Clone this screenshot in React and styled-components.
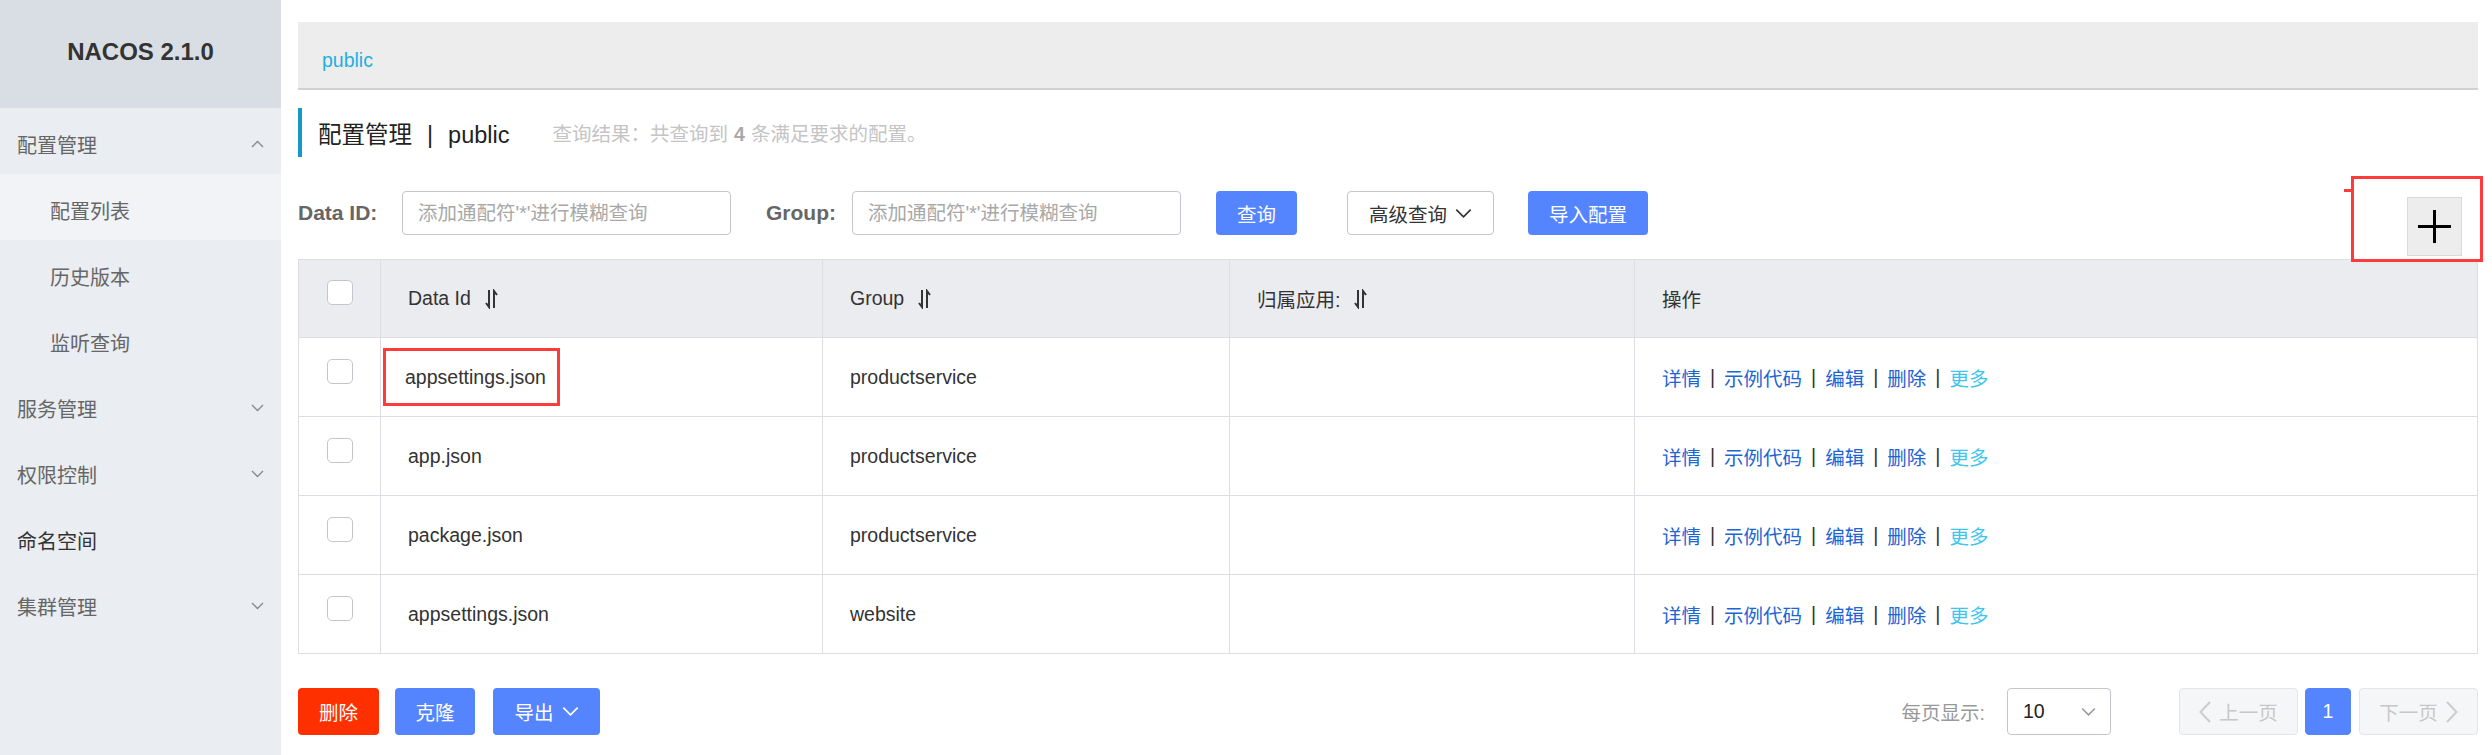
import React from 'react'
import styled, { createGlobalStyle } from 'styled-components'

const GlobalStyle = createGlobalStyle`
    body {
        margin: 0;
        font-family: "Liberation Sans", "Noto Sans CJK SC", sans-serif;
        color: #333;
        background: #fff;
    }
`;

const Page = styled.div`
    display: flex;
    min-height: 755px;
`;

const Sidebar = styled.aside`
    width: 281px;
    flex-shrink: 0;
    background: #eaedf1;
`;

const Brand = styled.div`
    height: 108px;
    background: #d9dee4;
    display: flex;
    align-items: center;
    justify-content: center;
    font-size: 24px;
    font-weight: bold;
    color: #333;
    padding-bottom: 4px;
    box-sizing: border-box;
`;

const MenuItem = styled.div`
    height: 66px;
    display: flex;
    align-items: center;
    justify-content: space-between;
    padding: 6px 17px 0 ${p => (p.$sub ? '50px' : '17px')};
    box-sizing: border-box;
    font-size: 20px;
    color: ${p => (p.$dark ? '#333' : '#666')};
    background: ${p => (p.$active ? '#f1f3f6' : 'transparent')};
`;

const Main = styled.main`
    flex: 1;
    min-width: 0;
    padding: 22px 14px 0 17px;
`;

const Breadcrumb = styled.div`
    height: 68px;
    box-sizing: border-box;
    background: #ededed;
    border-bottom: 2px solid #d1d1d1;
    display: flex;
    align-items: center;
    padding: 10px 0 0 24px;
    font-size: 19.5px;
    color: #1fb0e0;
`;

const TitleBar = styled.div`
    margin-top: 18px;
    height: 49px;
    border-left: 4px solid #1598d0;
    padding-left: 16px;
    display: flex;
    align-items: center;
`;

const Title = styled.h2`
    margin: 0;
    font-weight: normal;
    font-size: 23.5px;
    color: #222;

    span {
        margin: 0 15px;
    }
`;

const Summary = styled.span`
    margin-left: 43px;
    font-size: 19.5px;
    color: #c4c4c4;

    b {
        color: #a9a9a9;
        margin: 0 6px;
    }
`;

const SearchRow = styled.div`
    margin-top: 34px;
    height: 68px;
    display: flex;
    align-items: flex-start;
`;

const Label = styled.label`
    width: ${p => p.$w}px;
    height: 44px;
    line-height: 44px;
    font-size: 21px;
    font-weight: bold;
    color: #666;
    flex-shrink: 0;
`;

const Input = styled.input`
    width: 329px;
    height: 44px;
    box-sizing: border-box;
    border: 1px solid #c4c6cf;
    border-radius: 4px;
    padding: 0 15px;
    font-size: 19.5px;
    font-family: inherit;
    margin-right: ${p => p.$mr ?? 35}px;
    outline: none;

    &::placeholder {
        color: #a8a8a8;
    }
`;

const Button = styled.button`
    height: ${p => p.$h || 44}px;
    width: ${p => p.$w}px;
    margin-left: ${p => p.$ml || 0}px;
    box-sizing: border-box;
    border-radius: 4px;
    border: 1px solid ${p => (p.$kind === 'normal' ? '#c4c6cf' : 'transparent')};
    background: ${p => (p.$kind === 'danger' ? '#ff3000' : p.$kind === 'normal' ? '#fff' : '#5584ff')};
    color: ${p => (p.$kind === 'normal' ? '#333' : '#fff')};
    font-family: inherit;
    font-size: 19.5px;
    display: inline-flex;
    align-items: center;
    justify-content: center;
    gap: 8px;
    padding: 0;
    flex-shrink: 0;
`;

const PlusWrap = styled.div`
    position: relative;
    margin: 6px 16px 0 auto;
`;

const PlusButton = styled.button`
    width: 55px;
    height: 59px;
    box-sizing: border-box;
    background: #ededed;
    border: 1px solid #d9d9d9;
    display: flex;
    align-items: center;
    justify-content: center;
    padding: 0;
`;

const Callout = styled.div`
    position: absolute;
    left: -56px;
    top: -21px;
    right: -21px;
    bottom: -6px;
    border: 3px solid #ff3b3b;
    pointer-events: none;

    &::before {
        content: '';
        position: absolute;
        left: -10px;
        top: 10px;
        width: 8px;
        height: 3px;
        background: #ff3b3b;
    }
`;

const Table = styled.table`
    width: 100%;
    border-collapse: collapse;
    table-layout: fixed;
    font-size: 19.5px;
`;

const Th = styled.th`
    height: 78px;
    box-sizing: border-box;
    background: #ebecf0;
    border: 1px solid #dcdee3;
    text-align: ${p => (p.$center ? 'center' : 'left')};
    padding: 0 0 0 ${p => (p.$center ? 0 : 27)}px;
    font-weight: normal;
    color: #333;
`;

const Td = styled.td`
    height: 79px;
    box-sizing: border-box;
    border: 1px solid #dcdee3;
    text-align: ${p => (p.$center ? 'center' : 'left')};
    padding: 0 0 0 ${p => (p.$center ? 0 : 27)}px;
    color: #333;
    white-space: nowrap;
`;

const HeadCell = styled.span`
    display: inline-flex;
    align-items: center;
    gap: 14px;
`;

const Checkbox = styled.span`
    display: inline-block;
    width: 26px;
    height: 25px;
    box-sizing: border-box;
    border: 1px solid #c4c6cf;
    border-radius: 5px;
    background: #fff;
    vertical-align: middle;
    margin-top: -14px;
`;

const Marked = styled.span`
    display: inline-block;
    margin-left: -25px;
    padding: 15px 11px 15px 19px;
    border: 3px solid #ff3b3b;
    line-height: 22px;
`;

const Actions = styled.div`
    display: flex;
    align-items: center;
`;

const Link = styled.a`
    color: ${p => (p.$light ? '#3cc5ee' : '#1d64d4')};
    text-decoration: none;
`;

const Sep = styled.span`
    margin: 0 9px;
    color: #333;
`;

const Footer = styled.div`
    margin-top: 34px;
    display: flex;
    align-items: center;
    height: 47px;
`;

const PageSize = styled.span`
    margin-left: auto;
    font-size: 19.5px;
    color: #999;
`;

const Select = styled.div`
    width: 104px;
    height: 47px;
    box-sizing: border-box;
    margin-left: 22px;
    border: 1px solid #c4c6cf;
    border-radius: 4px;
    display: flex;
    align-items: center;
    justify-content: space-between;
    padding: 0 14px 0 15px;
    font-size: 19.5px;
    color: #222;
`;

const PageButton = styled.button`
    height: 47px;
    width: ${p => p.$w}px;
    margin-left: ${p => p.$ml}px;
    box-sizing: border-box;
    border-radius: 4px;
    border: 1px solid ${p => (p.$current ? '#5584ff' : '#e3e5ea')};
    background: ${p => (p.$current ? '#5584ff' : '#f5f6f8')};
    color: ${p => (p.$current ? '#fff' : '#c8c8c8')};
    font-family: inherit;
    font-size: 19.5px;
    display: inline-flex;
    align-items: center;
    justify-content: center;
    gap: 8px;
    padding: 0;
`;

const Chevron = ({ up, color = '#888', w = 13, h = 8 }) => (
    <svg width={w} height={h} viewBox="0 0 13 8" fill="none">
        <polyline
            points={up ? '1,7 6.5,1.5 12,7' : '1,1 6.5,6.5 12,1'}
            stroke={color}
            strokeWidth="1.3"
        />
    </svg>
);

const Arrow = ({ left, color = '#ccc' }) => (
    <svg width="12" height="22" viewBox="0 0 12 22" fill="none">
        <polyline
            points={left ? '11,1 1.5,11 11,21' : '1,1 10.5,11 1,21'}
            stroke={color}
            strokeWidth="2"
        />
    </svg>
);

const SortIcon = () => (
    <svg width="13" height="20" viewBox="0 0 13 20" fill="none" stroke="#333" strokeWidth="2">
        <path d="M4 1 V18 L1 14" />
        <path d="M9 19 V2 L12 6" />
    </svg>
);

const PlusIcon = () => (
    <svg width="33" height="33" viewBox="0 0 33 33">
        <path d="M16.5 0 V33 M0 16.5 H33" stroke="#000" strokeWidth="3" />
    </svg>
);

const menu = [
    { label: '配置管理', chevron: 'up' },
    { label: '配置列表', sub: true, active: true },
    { label: '历史版本', sub: true },
    { label: '监听查询', sub: true },
    { label: '服务管理', chevron: 'down' },
    { label: '权限控制', chevron: 'down' },
    { label: '命名空间', dark: true },
    { label: '集群管理', chevron: 'down' },
];

const rows = [
    { id: 'appsettings.json', group: 'productservice', marked: true },
    { id: 'app.json', group: 'productservice' },
    { id: 'package.json', group: 'productservice' },
    { id: 'appsettings.json', group: 'website' },
];

const actions = ['详情', '示例代码', '编辑', '删除'];

export default function App() {
    return (
        <Page>
            <GlobalStyle />
            <Sidebar>
                <Brand>NACOS 2.1.0</Brand>
                {menu.map(m => (
                    <MenuItem key={m.label} $sub={m.sub} $active={m.active} $dark={m.dark}>
                        <span>{m.label}</span>
                        {m.chevron && <Chevron up={m.chevron === 'up'} />}
                    </MenuItem>
                ))}
            </Sidebar>

            <Main>
                <Breadcrumb>public</Breadcrumb>

                <TitleBar>
                    <Title>
                        配置管理<span>|</span>public
                    </Title>
                    <Summary>
                        查询结果：共查询到<b>4</b>条满足要求的配置。
                    </Summary>
                </TitleBar>

                <SearchRow>
                    <Label $w={104}>Data ID:</Label>
                    <Input placeholder="添加通配符'*'进行模糊查询" />
                    <Label $w={86}>Group:</Label>
                    <Input placeholder="添加通配符'*'进行模糊查询" $mr={0} />
                    <Button $w={81} $ml={35}>查询</Button>
                    <Button $w={147} $ml={50} $kind="normal">
                        高级查询 <Chevron color="#333" w={17} h={11} />
                    </Button>
                    <Button $w={120} $ml={34}>导入配置</Button>
                    <PlusWrap>
                        <PlusButton>
                            <PlusIcon />
                        </PlusButton>
                        <Callout />
                    </PlusWrap>
                </SearchRow>

                <Table>
                    <colgroup>
                        <col style={{ width: 82 }} />
                        <col style={{ width: 442 }} />
                        <col style={{ width: 407 }} />
                        <col style={{ width: 405 }} />
                        <col />
                    </colgroup>
                    <thead>
                        <tr>
                            <Th $center><Checkbox /></Th>
                            <Th><HeadCell>Data Id <SortIcon /></HeadCell></Th>
                            <Th><HeadCell>Group <SortIcon /></HeadCell></Th>
                            <Th><HeadCell>归属应用: <SortIcon /></HeadCell></Th>
                            <Th>操作</Th>
                        </tr>
                    </thead>
                    <tbody>
                        {rows.map((r, i) => (
                            <tr key={i}>
                                <Td $center><Checkbox /></Td>
                                <Td>{r.marked ? <Marked>{r.id}</Marked> : r.id}</Td>
                                <Td>{r.group}</Td>
                                <Td />
                                <Td>
                                    <Actions>
                                        {actions.map(a => (
                                            <React.Fragment key={a}>
                                                <Link href="#">{a}</Link>
                                                <Sep>|</Sep>
                                            </React.Fragment>
                                        ))}
                                        <Link href="#" $light>更多</Link>
                                    </Actions>
                                </Td>
                            </tr>
                        ))}
                    </tbody>
                </Table>

                <Footer>
                    <Button $w={81} $h={47} $kind="danger">删除</Button>
                    <Button $w={80} $h={47} $ml={16}>克隆</Button>
                    <Button $w={107} $h={47} $ml={18}>
                        导出 <Chevron color="#fff" w={17} h={11} />
                    </Button>

                    <PageSize>每页显示:</PageSize>
                    <Select>
                        <span>10</span>
                        <Chevron color="#999" w={15} h={10} />
                    </Select>
                    <PageButton $w={119} $ml={68}>
                        <Arrow left /> 上一页
                    </PageButton>
                    <PageButton $w={46} $ml={7} $current>1</PageButton>
                    <PageButton $w={119} $ml={8}>
                        下一页 <Arrow />
                    </PageButton>
                </Footer>
            </Main>
        </Page>
    )
}
